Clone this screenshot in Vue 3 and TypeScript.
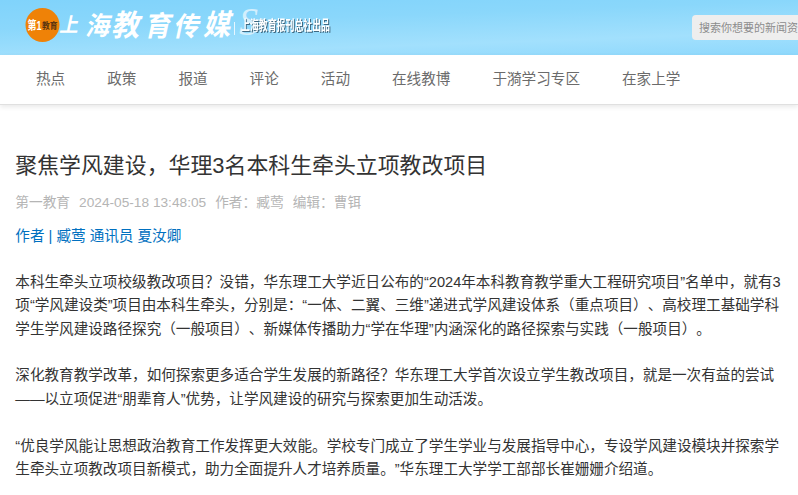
<template>
  <div class="page">
    <header class="banner">
      <svg class="brand" width="340" height="54" viewBox="0 0 340 54">
        <circle cx="42.5" cy="25" r="17" fill="#ef8207" />
        <text class="badge-main" x="27.5" y="30" textLength="14" lengthAdjust="spacingAndGlyphs">第1</text>
        <text class="badge-sub" x="42" y="29" textLength="15.5" lengthAdjust="spacingAndGlyphs">教育</text>
        <g class="brush">
          <text
            v-for="glyph in brandGlyphs"
            :key="glyph.char"
            :font-size="glyph.size"
            :transform="`translate(${glyph.x} ${glyph.y}) skewX(-12) scale(0.94 1)`"
          >{{ glyph.char }}</text>
        </g>
        <rect x="234" y="22" width="1" height="13" fill="#e6f6ff" />
        <text class="swash" x="239" y="35" textLength="19" lengthAdjust="spacingAndGlyphs">S</text>
        <text class="slogan" x="241" y="30" textLength="89" lengthAdjust="spacingAndGlyphs">上海教育报刊总社出品</text>
      </svg>
      <input v-model="keyword" class="search" type="text" placeholder="搜索你想要的新闻资讯" />
    </header>

    <nav class="nav">
      <a v-for="item in navItems" :key="item" class="nav-item">{{ item }}</a>
    </nav>

    <article class="article">
      <h1 class="title">聚焦学风建设，华理3名本科生牵头立项教改项目</h1>
      <div class="meta">
        <span>第一教育</span>
        <span>2024-05-18 13:48:05</span>
        <span>作者：臧莺</span>
        <span>编辑：曹铒</span>
      </div>
      <div class="author">作者 | 臧莺 通讯员 夏汝卿</div>
      <p v-for="(lines, index) in paragraphs" :key="index" class="paragraph">
        <span v-for="line in lines" :key="line" class="line">{{ line }}</span>
      </p>
    </article>
  </div>
</template>

<script setup lang="ts">
import { ref } from 'vue';

interface BrandGlyph {
  char: string;
  x: number;
  y: number;
  size: number;
}

const keyword = ref('');

// 站名逐字排布，字号大小错落
const brandGlyphs: BrandGlyph[] = [
  { char: '上', x: 59, y: 32, size: 20 },
  { char: '海', x: 85, y: 35, size: 26 },
  { char: '教', x: 111, y: 36, size: 30 },
  { char: '育', x: 144, y: 36, size: 28 },
  { char: '传', x: 173, y: 36, size: 27 },
  { char: '媒', x: 203, y: 35, size: 29 }
];

const navItems = ['热点', '政策', '报道', '评论', '活动', '在线教博', '于漪学习专区', '在家上学'];

const paragraphs: string[][] = [
  [
    '本科生牵头立项校级教改项目？没错，华东理工大学近日公布的“2024年本科教育教学重大工程研究项目”名单中，就有3',
    '项“学风建设类”项目由本科生牵头，分别是：“一体、二翼、三维”递进式学风建设体系（重点项目）、高校理工基础学科',
    '学生学风建设路径探究（一般项目）、新媒体传播助力“学在华理”内涵深化的路径探索与实践（一般项目）。'
  ],
  [
    '深化教育教学改革，如何探索更多适合学生发展的新路径？华东理工大学首次设立学生教改项目，就是一次有益的尝试',
    '——以立项促进“朋辈育人”优势，让学风建设的研究与探索更加生动活泼。'
  ],
  [
    '“优良学风能让思想政治教育工作发挥更大效能。学校专门成立了学生学业与发展指导中心，专设学风建设模块并探索学',
    '生牵头立项教改项目新模式，助力全面提升人才培养质量。”华东理工大学学工部部长崔姗姗介绍道。'
  ]
];
</script>

<style>
html,
body {
  overflow: hidden;
  background: #fff;
}
</style>

<style scoped>
.page {
  width: 100%;
  height: 495px;
  overflow: hidden;
  font-family: 'Liberation Sans', 'Noto Sans CJK SC', sans-serif;
  font-size: 14.6px;
  color: #333;
  text-spacing-trim: space-all; /* 全角标点保持整字宽 */
}

.banner {
  display: flex;
  align-items: flex-start;
  justify-content: space-between;
  height: 54.5px;
  overflow: hidden;
  background: linear-gradient(178deg, #80d3fb 0%, #8ad7fb 35%, #a2e0fd 72%, #8ed8fc 100%);
}

.brand {
  flex: none;
  display: block;
}

.brand text {
  font-family: 'Liberation Sans', 'Noto Sans CJK SC', sans-serif;
}

.badge-main {
  font-size: 12px;
  font-weight: 700;
  fill: #fff;
}

.badge-sub {
  font-size: 9px;
  font-weight: 700;
  fill: #5b3510;
}

.brush {
  fill: #fff;
  font-weight: 700;
}

.brand .swash {
  font-family: 'Liberation Serif', serif;
  font-size: 40px;
  font-style: italic;
  fill: #d3effd;
}

.slogan {
  font-size: 14px;
  font-weight: 700;
  fill: #fff;
  filter: drop-shadow(1px 1px 0.5px #3f6880);
}

.search {
  flex: none;
  box-sizing: border-box;
  width: 160px;
  height: 25px;
  margin: 15px -54px 0 0;
  padding: 0 7px;
  border: 0;
  border-radius: 4px;
  outline: none;
  background: #eee;
  color: #555;
  font-family: inherit;
  font-size: 11px;
}

.search::placeholder {
  color: #8c8c8c;
}

.nav {
  display: flex;
  gap: 42px;
  height: 49.5px;
  padding-left: 36px;
  background: #fff;
  border-bottom: 1px solid #e0e0e0;
  box-shadow: 0 2px 5px rgba(0, 0, 0, 0.09);
}

.nav-item {
  line-height: 49px;
  color: #6b6b6b;
  white-space: nowrap;
  cursor: pointer;
}

.article {
  padding: 46px 0 0 15.3px;
}

.title {
  margin: 0;
  font-size: 21.9px;
  font-weight: 400;
  line-height: 30px;
  white-space: nowrap;
}

.meta {
  display: flex;
  gap: 9px;
  margin-top: 12px;
  font-size: 13.7px;
  line-height: 20px;
  color: #b5b5b5;
  white-space: nowrap;
}

.author {
  margin-top: 11px;
  line-height: 24px;
  color: #0070c0;
}

.paragraph {
  margin: 0 0 23.36px;
  line-height: 23.36px;
}

.author + .paragraph {
  margin-top: 23px;
}

.line {
  display: block;
  white-space: nowrap;
}
</style>
